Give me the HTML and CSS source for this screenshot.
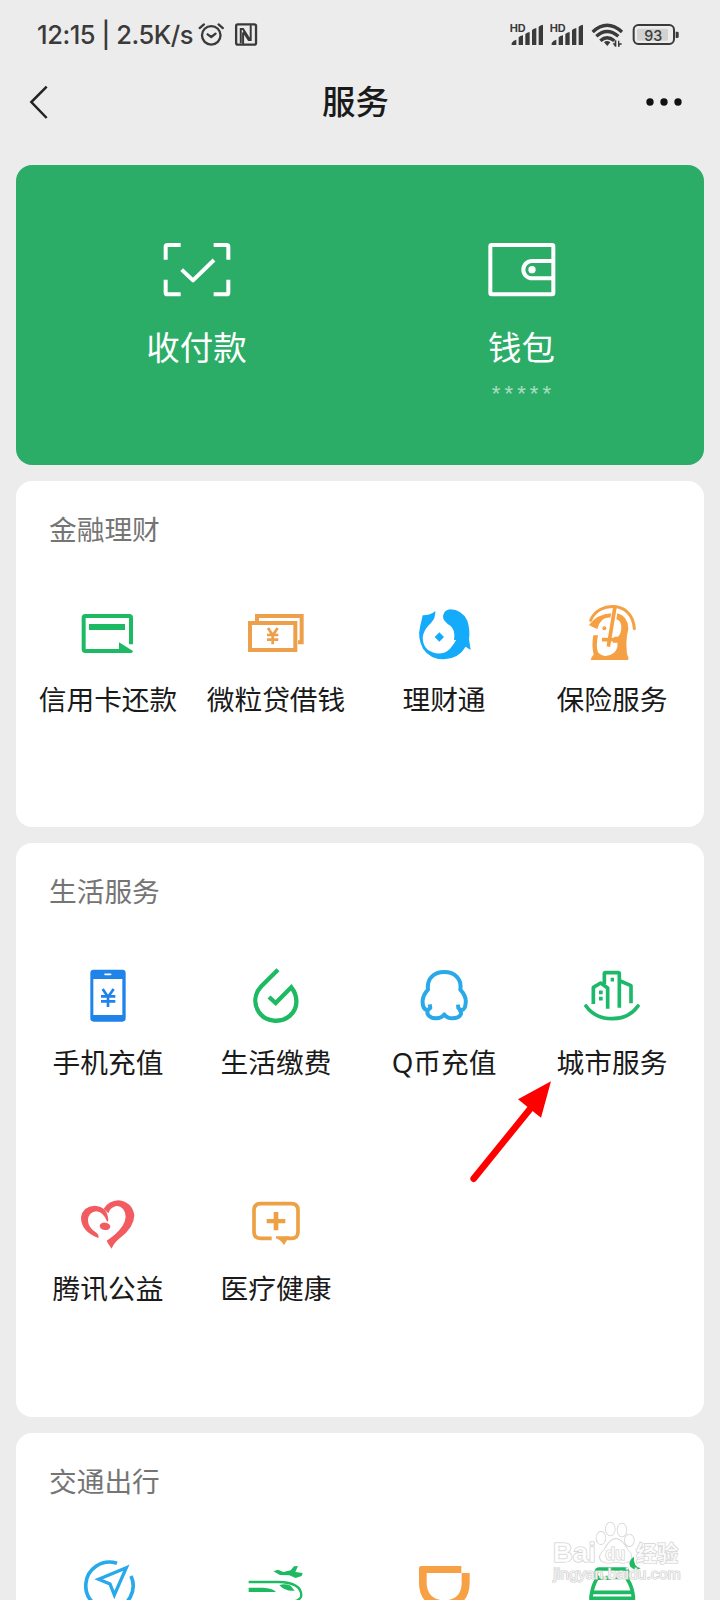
FILE: index.html
```html
<!DOCTYPE html>
<html lang="zh-CN">
<head>
<meta charset="utf-8">
<title>服务</title>
<link rel="stylesheet" href="styles.css">
</head>
<body>
<div class="screen">
  <div class="status">
    <span class="status-text">12:15 | 2.5K/s</span>
    <svg class="status-left" viewBox="530 30 190 84">
      <g fill="none" stroke="#3a3a3a" stroke-width="7" stroke-linecap="round" stroke-linejoin="round">
        <circle cx="573" cy="76" r="28"/><path d="M562 73l11 8 13-10M538 54l13-11M608 54l-13-11"/>
        <rect x="648" y="43" width="60" height="61" rx="5"/>
        <path stroke-width="6" stroke-linejoin="miter" d="M662 98V57h7l19 30M692 48v42h-6l-15-23M669 70v32"/>
      </g>
    </svg>
    <svg class="status-right" viewBox="54 30 522 84" fill="#3a3a3a">
      <g id="signal"><text class="hd" x="59" y="66" textLength="48" lengthAdjust="spacingAndGlyphs">HD</text>
        <path d="M65 105V99q6-9 14-10v16zM86 105V82q4-4 13-6v29zM106 105V72q5-4 13-6v39zM126 105V60q5-4 13-6v51zM146 105V50q5-5 13-6v61z"/></g>
      <use href="#signal" x="120"/>
      <g fill="none" stroke="#3a3a3a" stroke-width="10">
        <path d="M308 66Q351 26 396 66"/><path d="M319 79Q351 50 385 79"/><path d="M331 92Q351 74 373 92"/>
      </g>
      <path d="M342 97q9-8 19 0l-9 11zM368 100h6V91h5v19h-4zM384 92h4v8h7v4h-6v6h-5z"/>
      <rect x="431" y="45" width="121" height="57" rx="14" fill="none" stroke="#3a3a3a" stroke-width="6"/>
      <rect x="441" y="56" width="93" height="36" rx="4" fill="#d2d2d2"/>
      <path d="M557 65h5q4 0 4 4v11q0 4-4 4h-5z"/>
      <text class="battery" x="463" y="92" textLength="54" lengthAdjust="spacingAndGlyphs">93</text>
    </svg>
  </div>
  <header class="nav">
    <svg class="back" viewBox="24 216 66 114"><path d="M80 227L34 273L80 321" fill="none" stroke="#222" stroke-width="7.5"/></svg>
    <h1>服务</h1>
    <svg class="more" viewBox="468 256 108 36"><circle cx="480" cy="274" r="11"/><circle cx="522" cy="274" r="11"/><circle cx="564" cy="274" r="11"/></svg>
  </header>

  <main class="cards">
    <section class="pay">
      <div class="pay-item">
        <svg viewBox="100 65 204 165" fill="none" stroke="#fff" stroke-width="12">
          <path d="M153 74H113q-5 0-5 5V118M252 74H291q5 0 5 5V118M108 178V217q0 5 5 5H153M296 178V217q0 5-5 5H252"/><path stroke-linejoin="round" d="M156 148L190 180L253 119"/>
        </svg>
        <span>收付款</span>
      </div>
      <div class="pay-item">
        <svg viewBox="146 65 204 165" fill="none" stroke="#fff" stroke-width="12">
          <rect x="153" y="74" width="189" height="148" rx="4"/><path d="M342 122H278a26 26 0 0 0 0 52H342"/><circle cx="278" cy="148" r="11" fill="#fff" stroke="none"/>
        </svg>
        <span>钱包</span>
        <small>*****</small>
      </div>
    </section>

    <section class="card">
      <h2>金融理财</h2>
      <div class="grid">
        <div class="item">
          <svg viewBox="168 33 192 192"><path fill="none" stroke="#1dba63" stroke-width="12" d="M333 163V83q0-5-5-5H196q-5 0-5 5v95q0 5 5 5H310"/><path fill="#1dba63" d="M207 102H315V120H207zM297 157L339 183q-1 6-6 6H297z"/></svg>
          <span>信用卡还款</span>
        </div>
        <div class="item">
          <svg viewBox="672 33 192 192" fill="none" stroke="#ee9f4a" stroke-width="12"><path d="M711 93V78H845V157H834"/><rect x="690" y="99" width="136" height="81"/><path stroke-width="8" d="M744 114L758 136L773 114M741 135H775M741 149H775M758 134V163"/></svg>
          <span>微粒贷借钱</span>
        </div>
        <div class="item">
          <svg viewBox="126 33 192 192" fill="#14abfa"><path d="M158 76Q179 77 196 63Q197 84 183 99Q161 118 158 143Q159 177 187 187Q218 198 240 176Q252 162 259 149Q249 154 253 141Q254 119 242 108Q218 93 219 78Q222 60 240 58Q276 59 292 92Q301 120 297 147L302 180L287 170Q267 205 222 208Q180 208 159 176Q142 145 150 111Q155 91 158 76z"/><path d="M208 127l14 14-14 14-14-14z"/></svg>
          <span>理财通</span>
        </div>
        <div class="item">
          <svg viewBox="630 33 192 192" fill="none" stroke="#f5a043">
            <path stroke-width="9" stroke-linecap="round" d="M662 91C684 34 787 29 793 116"/>
            <path fill="#f5a043" stroke="none" d="M657 105Q682 72 724 70L721 83Q692 80 682 117Q668 112 657 105z"/>
            <path fill="#f5a043" stroke="none" d="M742 70Q774 78 775 116Q767 152 770 176Q770 194 775 201V210H662Q663 201 671 194Q664 168 670 136H684Q677 172 684 187Q705 209 732 188Q745 175 742 158H728L733 140H744Q754 132 754 108Q751 90 739 88z"/>
            <path stroke-width="11" d="M735 50L715 170M696 149H744"/>
            <circle cx="703" cy="115" r="6" fill="#f5a043" stroke="none"/>
          </svg>
          <span>保险服务</span>
        </div>
      </div>
    </section>

    <section class="card life">
      <h2>生活服务</h2>
      <div class="grid">
        <div class="item">
          <svg viewBox="168 42 192 192"><path fill="#1f83ea" fill-rule="evenodd" d="M221 59H307q10 0 10 10V205q0 10-10 10H221q-10 0-10-10V69q0-10 10-10zM220 87V195H307V87z"/><path stroke="#fff" stroke-width="5" stroke-linecap="round" d="M255 73H272"/><path fill="none" stroke="#1f83ea" stroke-width="8" d="M248 117L264 141L281 117M243 139H286M243 154H286M264 140V171"/></svg>
          <span>手机充值</span>
        </div>
        <div class="item">
          <svg viewBox="672 42 192 192"><path fill="none" stroke="#1dba63" stroke-width="13" d="M774 59L724 109C703 132 700 161 717 187C737 216 783 221 810 197C837 173 833 136 814 112L767 159L747 141"/></svg>
          <span>生活缴费</span>
        </div>
        <div class="item">
          <svg viewBox="126 42 192 192"><path fill="none" stroke="#2aa9e9" stroke-width="12" stroke-linejoin="round" d="M179 163L181 174L172 181Q156 176 158 151Q160 134 174 119C170 85 192 66 223 66C254 66 276 87 271 119Q290 140 287 159Q286 179 274 181L265 174L264 164M174 181C167 194 182 205 199 205Q216 204 223 193Q232 206 248 205C269 204 280 193 268 178"/></svg>
          <span>Q币充值</span>
        </div>
        <div class="item">
          <svg viewBox="630 42 192 192" fill="none" stroke="#1db96b" stroke-width="11"><path stroke-linejoin="round" d="M670 162V112L692 99L713 114V176M703 102V72q0-4 4-4H744q4 0 4 4V173M751 93L783 107V160"/><path stroke-linecap="round" d="M648 168Q675 206 727 206Q777 206 804 168"/><path stroke-width="11" d="M687 127H698M687 146H698M722 89H732"/></svg>
          <span>城市服务</span>
        </div>
        <div class="item">
          <svg viewBox="168 30 192 192" fill="#f25b5f"><path d="M235 174Q183 155 183 112Q188 79 224 77Q263 79 265 121L262 126Q250 95 228 94Q205 98 204 120Q204 143 229 158Q238 165 235 174z"/><path d="M251 86Q267 62 295 61Q337 66 343 106Q342 143 300 174Q282 188 275 206Q264 192 260 182Q290 164 309 136Q324 109 310 88Q292 68 270 89L265 100z"/><ellipse cx="255" cy="139" rx="16" ry="11" transform="rotate(8 255 139)"/></svg>
          <span>腾讯公益</span>
        </div>
        <div class="item">
          <svg viewBox="672 30 192 192" fill="#eea144"><path fill="none" stroke="#eea144" stroke-width="11" d="M755 175H722q-20 0-20-20V91q0-20 20-20H814q20 0 20 20V155q0 20-20 20H792"/><path d="M768 169H808L792 196q-10-17-24-21zM761 96H775V117H796V130H775V151H761V130H740V117H761z"/></svg>
          <span>医疗健康</span>
        </div>
      </div>
    </section>

    <section class="card">
      <h2>交通出行</h2>
      <div class="grid">
        <div class="item">
          <svg viewBox="168 339 192 192" fill="none" stroke="#27a9eb" stroke-width="11"><path d="M291 367A71 71 0 1 0 333 405"/><path stroke-width="10" d="M319 380L236 415L270 429L283 462z"/></svg>
        </div>
        <div class="item">
          <svg viewBox="672 339 192 192" fill="#1dba63"><path d="M760 391L774 386L790 393L812 388L822 376L834 375L826 393L848 396L845 405L827 411L808 403L780 402zM686 440H728Q758 441 768 453H686zM778 433Q792 426 812 434L824 449Q796 452 778 433z"/><path fill="none" stroke="#1dba63" stroke-width="7" d="M686 423H775Q844 424 844 464Q842 478 815 483H686"/></svg>
        </div>
        <div class="item">
          <svg viewBox="126 159 192 192" fill="#f7a044"><path fill-rule="evenodd" d="M154 195H274V216H299V246Q298 318 223 320Q148 318 147 246V202q0-7 7-7zM170 216V250Q174 297 223 298Q272 297 275 250V216z"/></svg>
        </div>
        <div class="item">
          <svg viewBox="630 159 192 192" fill="none" stroke="#1dba63" stroke-width="11"><path d="M663 315V288Q667 257 679 236V213q0-9 9-9H764q9 0 9 9V236Q787 257 790 288V315M668 274H786M663 292H790"/><path stroke-width="6" d="M685 224V234H697V224M710 224V234H722M735 224V232H745V224"/><path fill="#1dba63" stroke="none" d="M792 167Q772 178 781 197Q795 211 812 202Q789 196 792 167z"/></svg>
        </div>
      </div>
    </section>
  </main>

  <svg class="arrow" viewBox="290 384 260 322"><path stroke="red" stroke-width="20" stroke-linecap="round" d="M310 686L480 476"/><path fill="red" d="M542 394L443 448L512 503z"/></svg>

  <svg class="watermark" viewBox="540 60 400 200" fill="#fff" fill-opacity=".75" stroke="#cfcfcf" stroke-width="3.5">
    <text class="wm-big" x="548" y="187" textLength="130" lengthAdjust="spacingAndGlyphs">Bai</text>
    <path d="M738 116Q760 120 772 148Q794 166 779 183Q767 194 738 185Q708 194 694 183Q681 168 704 148Q717 119 738 116z"/>
    <ellipse cx="693" cy="114" rx="14" ry="19"/><ellipse cx="721" cy="87" rx="14" ry="20"/><ellipse cx="756" cy="90" rx="14" ry="20"/><ellipse cx="778" cy="121" rx="14" ry="18"/>
    <text class="wm-du" x="706" y="181" textLength="60" lengthAdjust="spacingAndGlyphs">du</text>
    <text class="wm-cn" x="797" y="182" textLength="128" lengthAdjust="spacingAndGlyphs">经验</text>
    <text class="wm-url" x="550" y="236" textLength="382" lengthAdjust="spacingAndGlyphs">jingyan.baidu.com</text>
  </svg>
</div>
</body>
</html>
```
FILE: styles.css
```css
* { box-sizing: border-box; }
body {
  margin: 0;
  background: #ececec;
  font-family: "Noto Sans", "Noto Sans CJK SC", sans-serif;
  color: #1a1a1a;
}
svg { display: block; flex: none; }
.screen {
  position: relative;
  width: 720px;
  height: 1600px;
  overflow: hidden;
  background: #ececec;
}
.status {
  display: flex;
  align-items: center;
  height: 70px;
  padding: 0 44px 0 37px;
  color: #3a3a3a;
}
.status-text {
  width: 160px;
  font: 500 25.5px/40px Inter, sans-serif;
  letter-spacing: -0.45px;
  white-space: nowrap;
}
.status-left { width: 63px; height: 28px; margin-top: -2px; }
.status-right { width: 174px; height: 28px; margin: -2px -6px 0 auto; }
.hd { font: 700 30px Inter, sans-serif; }
.battery { font: 500 44px Inter, sans-serif; }
.nav {
  display: grid;
  grid-template-columns: 36px 1fr 36px;
  align-items: center;
  height: 64px;
  padding: 0 38px 0 28px;
}
.back { width: 22px; height: 38px; }
.more { width: 36px; height: 12px; fill: #111; }
.nav h1 {
  margin: 0 0 3px;
  padding-left: 1px;
  text-align: center;
  font-size: 33.5px;
  line-height: 48px;
  font-weight: 500;
}
.cards {
  display: flex;
  flex-direction: column;
  gap: 16px;
  padding: 31px 16px 0;
}
.pay {
  display: grid;
  grid-template-columns: 1fr 1fr;
  height: 299.5px;
  padding: 76.5px 20px 0 18px;
  border-radius: 16px;
  background: #2bad67;
  color: #fff;
}
.pay-item { display: flex; flex-direction: column; align-items: center; }
.pay-item svg { width: 68px; height: 55px; }
.pay-item span { margin-top: 25px; font-size: 33.5px; line-height: 50px; }
.pay-item small {
  font: 22px/30px "Liberation Sans", sans-serif;
  letter-spacing: 4.1px;
  margin: 7px -4px 0 0;
  opacity: .6;
}
.card {
  padding: 28px 8px 0;
  border-radius: 16px;
  background: #fff;
}
.card h2 {
  margin: 0 0 52.5px;
  padding-left: 25px;
  font-size: 27.7px;
  line-height: 40px;
  font-weight: 400;
  color: #757575;
}
.life { padding-bottom: 1.5px; }
.grid {
  display: grid;
  grid-template-columns: repeat(4, 168px);
  grid-auto-rows: 226px;
}
.item { display: flex; flex-direction: column; align-items: center; gap: 14px; }
.item svg { width: 64px; height: 64px; }
.item span { font-size: 27.7px; line-height: 40px; white-space: nowrap; }
.arrow { position: absolute; left: 466.7px; top: 1078px; width: 86.7px; height: 107.3px; }
.watermark { position: absolute; left: 550px; top: 1520px; width: 133.3px; height: 66.7px; paint-order: stroke; }
.wm-big { font: 700 84px "Liberation Sans", sans-serif; }
.wm-du { font: 700 54px "Liberation Sans", sans-serif; }
.wm-cn { font: 700 66px "Noto Sans CJK SC", sans-serif; }
.wm-url { font: 400 42px "Liberation Sans", sans-serif; }
```
